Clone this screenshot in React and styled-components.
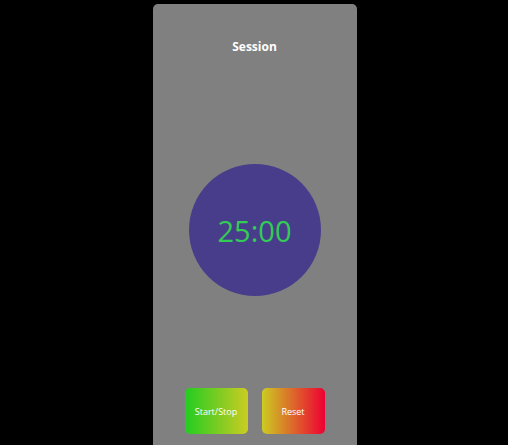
import React from 'react'
import styled, { createGlobalStyle } from 'styled-components'

const GlobalStyle = createGlobalStyle`
  html, body {
    margin: 0;
    background: #000;
    font-family: 'Open Sans', 'Noto Sans', sans-serif;
    overflow: hidden;
  }
`

const Page = styled.div`
  display: flex;
  justify-content: center;
  padding-top: 4px;
  padding-left: 1px;
`

const Card = styled.div`
  width: 204px;
  height: 460px;
  background: #808080;
  border-radius: 5px;
  display: flex;
  flex-direction: column;
  align-items: center;
`

const Title = styled.h2`
  margin: 34px 0 0;
  font-size: 12px;
  font-weight: 700;
  color: #fff;
  line-height: 18px;
`

const Clock = styled.div`
  width: 132px;
  height: 132px;
  margin-top: 108px;
  border-radius: 50%;
  background: #483d8b;
  display: flex;
  align-items: center;
  justify-content: center;
`

const Time = styled.span`
  font-size: 29px;
  font-weight: 400;
  color: #33cc55;
`

const Controls = styled.div`
  display: flex;
  gap: 14px;
  margin-top: 92px;
`

const Button = styled.button`
  width: 63px;
  height: 46px;
  border: none;
  border-radius: 5px;
  color: #fff;
  font-family: inherit;
  font-size: 9px;
  cursor: pointer;
  background: ${(p) => p.$gradient};
`

function App() {
  return (
    <>
      <GlobalStyle />
      <Page>
        <Card>
          <Title>Session</Title>
          <Clock>
            <Time>25:00</Time>
          </Clock>
          <Controls>
            <Button $gradient="linear-gradient(90deg, #22cc22, #cccc22)">Start/Stop</Button>
            <Button $gradient="linear-gradient(90deg, #cccc22, #ee0033)">Reset</Button>
          </Controls>
        </Card>
      </Page>
    </>
  )
}

export default App
